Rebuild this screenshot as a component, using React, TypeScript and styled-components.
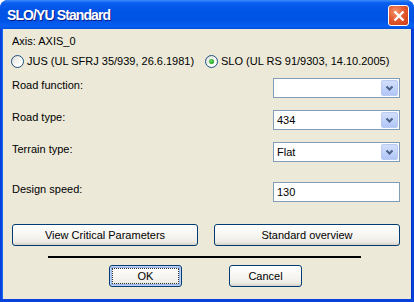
import React from "react";
import styled, { createGlobalStyle } from "styled-components";

const GlobalStyle = createGlobalStyle`
  html, body {
    margin: 0;
    padding: 0;
    background: #ffffff;
  }
  * {
    box-sizing: border-box;
  }
`;

const Window = styled.div`
  width: 414px;
  height: 302px;
  display: flex;
  flex-direction: column;
  font-family: "Liberation Sans", Arial, sans-serif;
  font-size: 11px;
  color: #000;
  border-radius: 8px 8px 0 0;
  overflow: hidden;
  background: #0842dc;
`;

const TitleBar = styled.div`
  height: 29px;
  flex-shrink: 0;
  display: flex;
  align-items: center;
  justify-content: space-between;
  padding: 0 5px 0 7px;
  background: linear-gradient(
    180deg,
    #3c8cf8 0%,
    #0a5ff0 10%,
    #0055e8 35%,
    #0053e4 70%,
    #0660f4 90%,
    #0050de 100%
  );
`;

const Title = styled.span`
  font-family: "Liberation Sans", Arial, sans-serif;
  font-weight: bold;
  font-size: 14px;
  letter-spacing: -0.9px;
  color: #fff;
  text-shadow: 1px 1px 0 #0a1c8a;
  padding-top: 1px;
`;

const CloseButton = styled.div`
  width: 21px;
  height: 21px;
  border: 1px solid #ffffff;
  border-radius: 3px;
  background: radial-gradient(
    circle at 35% 30%,
    #f4946c 0%,
    #e45a30 45%,
    #cc3c14 100%
  );
  display: flex;
  align-items: center;
  justify-content: center;
  margin-top: 2px;
`;

const Body = styled.div`
  flex: 1;
  background: #ece9d8;
  margin: 0 3px 3px 3px;
  padding: 6px 11px 0 9px;
  display: flex;
  flex-direction: column;
  box-shadow: -1px 0 0 #166aee, 1px 0 0 #0030c8;
`;

const Line = styled.div`
  height: 13px;
  line-height: 13px;
  white-space: nowrap;
`;

const RadioRow = styled.div`
  display: grid;
  grid-template-columns: 194px 1fr;
  margin-top: 7px;
  margin-left: -1px;
`;

const RadioOption = styled.label`
  display: flex;
  align-items: center;
  gap: 3px;
  height: 13px;
  line-height: 13px;
  white-space: nowrap;
`;

const RadioCircle = styled.span<{ $checked?: boolean }>`
  width: 13px;
  height: 13px;
  border-radius: 50%;
  border: 1px solid #1c5180;
  background: linear-gradient(135deg, #dcdcd5 0%, #ffffff 70%);
  display: flex;
  align-items: center;
  justify-content: center;
  flex-shrink: 0;
  &::after {
    content: "";
    display: ${(p) => (p.$checked ? "block" : "none")};
    width: 5px;
    height: 5px;
    border-radius: 50%;
    background: radial-gradient(circle at 40% 40%, #6cde6c 0%, #21a121 70%);
  }
`;

const Fields = styled.div`
  display: flex;
  flex-direction: column;
  gap: 12px;
  margin-top: 10px;
`;

const FieldRow = styled.div<{ $spaced?: boolean }>`
  display: grid;
  grid-template-columns: 1fr 127px;
  align-items: start;
  margin-top: ${(p) => (p.$spaced ? "8px" : "0")};
`;

const FieldLabel = styled.span`
  line-height: 13px;
  padding-top: 1px;
`;

const Combo = styled.div`
  height: 20px;
  border: 1px solid #7f9db9;
  background: #fff;
  display: flex;
  align-items: center;
  justify-content: space-between;
  padding: 0 1px 0 3px;
`;

const ComboValue = styled.span`
  line-height: 13px;
`;

const DropButton = styled.div`
  width: 17px;
  height: 16px;
  border: 1px solid #b9cbf3;
  border-radius: 2px;
  background: linear-gradient(180deg, #d2defb 0%, #c1d3fb 50%, #b0c6f6 100%);
  display: flex;
  align-items: center;
  justify-content: center;
`;

const TextBox = styled.div`
  height: 20px;
  border: 1px solid #7f9db9;
  background: #fff;
  display: flex;
  align-items: center;
  padding-left: 3px;
`;

const ButtonGrid = styled.div`
  display: grid;
  grid-template-columns: 186px 186px;
  gap: 16px;
  margin-top: 22px;
`;

const Button = styled.div<{ $focused?: boolean }>`
  height: 22px;
  border: 1px solid #003c74;
  border-radius: 3px;
  background: linear-gradient(
    180deg,
    #ffffff 0%,
    #f5f4ef 60%,
    #ecebe5 85%,
    #d6d0c5 100%
  );
  display: flex;
  align-items: center;
  justify-content: center;
  position: relative;
  white-space: nowrap;
  box-shadow: ${(p) =>
    p.$focused ? "inset 0 0 0 1px #bccff4, inset 0 0 0 2px #98b8ea" : "none"};
  &::after {
    content: "";
    display: ${(p) => (p.$focused ? "block" : "none")};
    position: absolute;
    inset: 2px;
    border: 1px dotted #333;
    border-radius: 1px;
  }
`;

const Separator = styled.div`
  height: 2px;
  width: 313px;
  background: #000;
  margin: 10px 0 0 36px;
`;

const Actions = styled.div`
  display: flex;
  justify-content: center;
  gap: 47px;
  margin-top: 7px;
  padding-right: 1px;
`;

const ActionButton = styled(Button)`
  width: 73px;
`;

function Chevron() {
  return (
    <svg width="9" height="7" viewBox="0 0 9 7">
      <path d="M1.5 1.5 L4.5 4.5 L7.5 1.5" fill="none" stroke="#4d6185" strokeWidth="2" />
    </svg>
  );
}

function CloseIcon() {
  return (
    <svg width="12" height="12" viewBox="0 0 12 12">
      <path d="M1.5 1.5 L10.5 10.5 M10.5 1.5 L1.5 10.5" stroke="#fff" strokeWidth="2.4" />
    </svg>
  );
}

const fields = [
  { label: "Road function:", value: "", combo: true },
  { label: "Road type:", value: "434", combo: true },
  { label: "Terrain type:", value: "Flat", combo: true },
  { label: "Design speed:", value: "130", combo: false },
];

export default function App() {
  return (
    <>
      <GlobalStyle />
      <Window>
        <TitleBar>
          <Title>SLO/YU Standard</Title>
          <CloseButton>
            <CloseIcon />
          </CloseButton>
        </TitleBar>
        <Body>
          <Line>Axis: AXIS_0</Line>
          <RadioRow>
            <RadioOption>
              <RadioCircle />
              JUS (UL SFRJ 35/939, 26.6.1981)
            </RadioOption>
            <RadioOption>
              <RadioCircle $checked />
              SLO (UL RS 91/9303, 14.10.2005)
            </RadioOption>
          </RadioRow>
          <Fields>
            {fields.map((f) => (
              <FieldRow key={f.label} $spaced={!f.combo}>
                <FieldLabel>{f.label}</FieldLabel>
                {f.combo ? (
                  <Combo>
                    <ComboValue>{f.value}</ComboValue>
                    <DropButton>
                      <Chevron />
                    </DropButton>
                  </Combo>
                ) : (
                  <TextBox>{f.value}</TextBox>
                )}
              </FieldRow>
            ))}
          </Fields>
          <ButtonGrid>
            <Button>View Critical Parameters</Button>
            <Button>Standard overview</Button>
          </ButtonGrid>
          <Separator />
          <Actions>
            <ActionButton $focused>OK</ActionButton>
            <ActionButton>Cancel</ActionButton>
          </Actions>
        </Body>
      </Window>
    </>
  );
}
